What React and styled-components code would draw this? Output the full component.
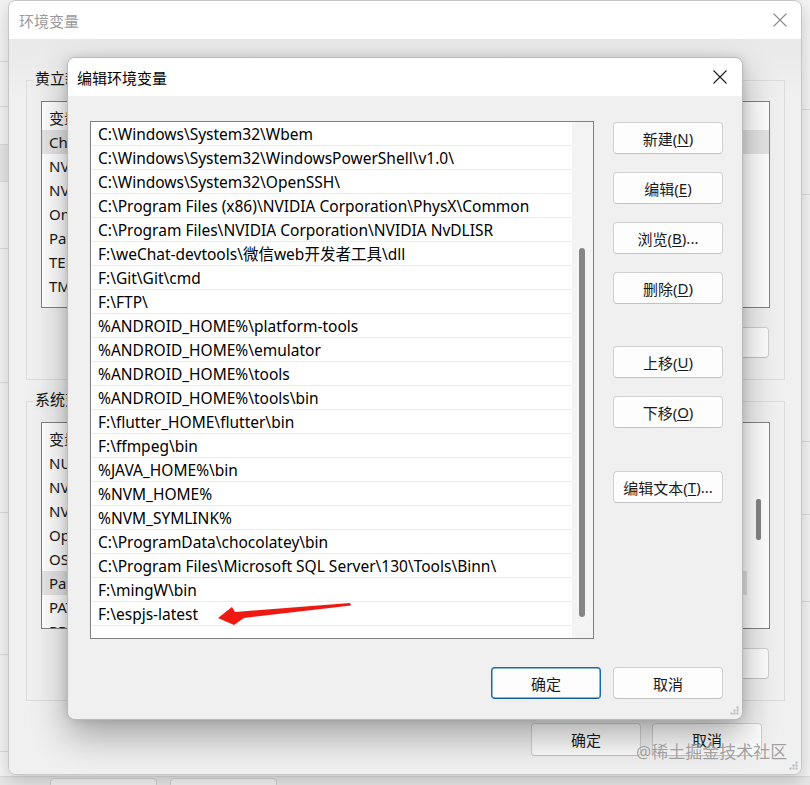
import React from "react";
import styled, { createGlobalStyle } from "styled-components";

const GlobalStyle = createGlobalStyle`
  html, body { margin: 0; padding: 0; }
  body {
    width: 810px; height: 785px; overflow: hidden; background: #ebebeb;
    font-family: "Noto Sans", "Noto Sans CJK SC", sans-serif;
    -webkit-font-smoothing: antialiased;
  }
  * { box-sizing: border-box; }
`;

const FONT = `"Noto Sans", "Noto Sans CJK SC", sans-serif`;

const Desktop = styled.div`
  position: relative;
  width: 810px;
  height: 785px;
  overflow: hidden;
  background: #ebebeb;
  font-family: ${FONT};
`;

/* ---------- far background window ---------- */
const BackWindow = styled.div`
  position: absolute;
  left: -20px;
  top: 0;
  width: 850px;
  height: 820px;
  background: #f3f3f3;
  display: grid;
  grid-template-columns: 28px 794px 28px;
  grid-template-rows: 776px auto;
`;

const Strip = styled.div`
  display: flex;
  flex-direction: column;
  background: #f4f4f4;
`;

const StripCell = styled.div`
  height: ${(p) => p.$h}px;
  border-bottom: ${(p) => (p.$noLine ? "none" : "1px solid #dadada")};
  background: ${(p) => (p.$grey ? "#e6e6e6" : "transparent")};
  display: flex;
  align-items: ${(p) => p.$align || "center"};
  justify-content: flex-end;
  font-size: 17px;
  color: #222;
  overflow: hidden;
  white-space: nowrap;
  padding-right: ${(p) => p.$pr ?? 20}px;
  padding-bottom: ${(p) => p.$pb ?? 0}px;
`;

const BackFooter = styled.div`
  grid-column: 1 / 4;
  display: flex;
  gap: 13px;
  padding-left: 70px;
  border-top: 1px solid #d8d8d8;
  background: #e6e6e6;
`;

const BackButton = styled.div`
  width: 107px;
  height: 30px;
  margin-top: 1px;
  border: 1px solid #cfcfcf;
  border-radius: 4px;
  background: #f2f2f2;
  font-size: 15px;
  color: ${(p) => (p.$disabled ? "#9a9a9a" : "#111")};
  display: flex;
  justify-content: center;
  padding-top: 2px;
`;

/* ---------- shared window parts ---------- */
const TitleBar = styled.div`
  height: 38px;
  flex: none;
  background: #ffffff;
  display: flex;
  align-items: center;
  justify-content: space-between;
  padding-left: ${(p) => p.$pl}px;
  padding-right: ${(p) => p.$pr}px;
  font-size: 15px;
  color: ${(p) => (p.$inactive ? "#9b9b9b" : "#000")};
`;

const CloseIcon = ({ color }) => (
  <svg width="14" height="14" viewBox="0 0 14 14">
    <path d="M0.5 0.5 L13.5 13.5 M13.5 0.5 L0.5 13.5" stroke={color} strokeWidth="1.1" fill="none" />
  </svg>
);

const Grip = styled.svg`
  position: absolute;
  right: ${(p) => p.$r}px;
  bottom: ${(p) => p.$b}px;
`;

const GripIcon = ({ r, b }) => (
  <Grip $r={r} $b={b} width="10" height="10" viewBox="0 0 10 10">
    <g fill="#b8b8b8">
      <rect x="7.5" y="0.5" width="2" height="2" />
      <rect x="4.5" y="3.5" width="2" height="2" />
      <rect x="7.5" y="3.5" width="2" height="2" />
      <rect x="1.5" y="6.5" width="2" height="2" />
      <rect x="4.5" y="6.5" width="2" height="2" />
      <rect x="7.5" y="6.5" width="2" height="2" />
    </g>
  </Grip>
);

const Button = styled.div`
  width: 110px;
  height: ${(p) => p.$h || 32}px;
  flex: none;
  margin-top: ${(p) => p.$mt || 0}px;
  border: 1px solid ${(p) => (p.$primary ? "#1868b3" : "#d0d0d0")};
  border-bottom-color: ${(p) => (p.$primary ? "#0f5a9f" : "#c2c2c2")};
  box-shadow: ${(p) => (p.$primary ? "inset 0 0 0 0.5px #1868b3" : "none")};
  border-radius: 4px;
  background: #fdfdfd;
  display: flex;
  align-items: center;
  justify-content: center;
  font-size: 15px;
  color: #1a1a1a;
  white-space: nowrap;
  u { text-decoration-thickness: 1px; text-underline-offset: 2px; }
`;

/* ---------- environment variables window ---------- */
const EnvWindow = styled.div`
  position: absolute;
  left: 8px;
  top: 0;
  width: 794px;
  height: 775px;
  border: 1px solid #c6c6c6;
  border-radius: 8px;
  background: #f0f0f0;
  overflow: hidden;
  display: flex;
  flex-direction: column;
  box-shadow: 0 6px 18px rgba(0, 0, 0, 0.18);
`;

const EnvBody = styled.div`
  flex: 1;
  display: flex;
  flex-direction: column;
  padding: 0 16px 0 17px;
  background: linear-gradient(#e9e9e9, #f0f0f0 60px);
`;

const GroupBox = styled.div`
  position: relative;
  margin-top: ${(p) => p.$mt}px;
  height: 300px;
  border: 1px solid #dcdcdc;
  padding: 20px 14px 0 14px;
  display: flex;
  flex-direction: column;
`;

const Legend = styled.span`
  position: absolute;
  top: -13px;
  left: 6px;
  padding: 0 2px;
  line-height: 20px;
  font-size: 15px;
  color: #111;
  background: #eeeeee;
`;

const VarList = styled.div`
  height: 207px;
  border: 1px solid #828282;
  background: #fff;
  display: flex;
  position: relative;
  overflow: hidden;
`;

const VarRows = styled.div`
  flex: 1;
  padding-top: 2px;
`;

const VarRow = styled.div`
  height: ${(p) => (p.$header ? 26 : 24)}px;
  display: flex;
  align-items: center;
  padding-left: 7px;
  font-size: 15px;
  color: #1a1a1a;
  white-space: nowrap;
  background: ${(p) => (p.$sel ? "#e5e5e5" : "transparent")};
`;

const EnvScroll = styled.div`
  width: 22px;
  flex: none;
  padding-top: ${(p) => p.$top}px;
  display: flex;
  justify-content: center;
`;

const EnvThumb = styled.div`
  width: 5px;
  height: ${(p) => p.$h}px;
  background: #858585;
  border-radius: 2px;
`;

const ButtonRow = styled.div`
  display: flex;
  justify-content: flex-end;
  gap: 11px;
  margin-top: ${(p) => p.$mt}px;
  padding-right: 1px;
`;

const EnvFooter = styled.div`
  display: flex;
  justify-content: flex-end;
  gap: 11px;
  margin-top: 22px;
  padding-right: 23px;
`;

/* ---------- edit dialog ---------- */
const Dialog = styled.div`
  position: absolute;
  left: 67px;
  top: 57px;
  width: 676px;
  height: 663px;
  border: 1px solid #b9b9b9;
  border-radius: 8px;
  background: #f0f0f0;
  overflow: hidden;
  display: flex;
  flex-direction: column;
  box-shadow: 0 16px 36px rgba(0, 0, 0, 0.32), 0 0 10px rgba(0, 0, 0, 0.12);
`;

const DialogBody = styled.div`
  flex: 1;
  display: flex;
  flex-direction: column;
  padding: 25px 19px 0 22px;
`;

const DialogMain = styled.div`
  display: flex;
  gap: 19px;
`;

const PathList = styled.div`
  width: 504px;
  height: 518px;
  flex: none;
  border: 1px solid #7f7f7f;
  background: #fff;
  display: flex;
  overflow: hidden;
`;

const PathRows = styled.div`
  flex: 1;
  display: flex;
  flex-direction: column;
`;

const PathRow = styled.div`
  height: 24px;
  flex: none;
  border-bottom: 1px solid #ececec;
  padding-left: 7px;
  font-size: 15.5px;
  line-height: 24px;
  color: #000;
  white-space: nowrap;
  overflow: hidden;
`;

const ScrollTrack = styled.div`
  width: 21px;
  flex: none;
  background: #f4f4f4;
  padding: 126px 0 0 7px;
`;

const ScrollThumb = styled.div`
  width: 6px;
  height: 369px;
  border-radius: 3px;
  background: #858585;
`;

const ButtonCol = styled.div`
  display: flex;
  flex-direction: column;
  padding-top: 1px;
`;

const DialogFooter = styled.div`
  display: flex;
  justify-content: flex-end;
  gap: 12px;
  margin-top: 28px;
`;

const Watermark = styled.div`
  position: absolute;
  left: 636px;
  top: 740px;
  font-size: 17px;
  line-height: 24px;
  color: rgba(130, 130, 130, 0.75);
  white-space: nowrap;
  text-shadow: 0 0 1px rgba(255, 255, 255, 0.6);
`;

const ArrowSvg = styled.svg`
  position: absolute;
  left: 210px;
  top: 595px;
`;

const paths = [
  "C:\\Windows\\System32\\Wbem",
  "C:\\Windows\\System32\\WindowsPowerShell\\v1.0\\",
  "C:\\Windows\\System32\\OpenSSH\\",
  "C:\\Program Files (x86)\\NVIDIA Corporation\\PhysX\\Common",
  "C:\\Program Files\\NVIDIA Corporation\\NVIDIA NvDLISR",
  "F:\\weChat-devtools\\微信web开发者工具\\dll",
  "F:\\Git\\Git\\cmd",
  "F:\\FTP\\",
  "%ANDROID_HOME%\\platform-tools",
  "%ANDROID_HOME%\\emulator",
  "%ANDROID_HOME%\\tools",
  "%ANDROID_HOME%\\tools\\bin",
  "F:\\flutter_HOME\\flutter\\bin",
  "F:\\ffmpeg\\bin",
  "%JAVA_HOME%\\bin",
  "%NVM_HOME%",
  "%NVM_SYMLINK%",
  "C:\\ProgramData\\chocolatey\\bin",
  "C:\\Program Files\\Microsoft SQL Server\\130\\Tools\\Binn\\",
  "F:\\mingW\\bin",
  "F:\\espjs-latest",
  "",
];

const userVars = ["ChocolateyLastPathUpdate", "NVM_HOME", "NVM_SYMLINK", "OneDrive", "Path", "TEMP", "TMP"];

const sysVars = ["NUMBER_OF_PROCESSORS", "NVM_HOME", "NVM_SYMLINK", "OpenSSL_DIR", "OS", "Path", "PATHEXT", "PROCESSOR_ARCHITECTURE"];

const leftCells = [
  { h: 62, t: "4", align: "flex-end", pb: 2 },
  { h: 45 },
  { h: 38 },
  { h: 37, grey: true },
  { h: 67, t: "。" },
  { h: 58, t: "虚", noLine: true },
  { h: 76 },
  { h: 130 },
  { h: 142 },
  { h: 97 },
];

const rightCells = [{ h: 110 }, { h: 85 }, { h: 247 }, { h: 73 }, { h: 87 }];

export default function App() {
  return (
    <>
      <GlobalStyle />
      <Desktop>
        <BackWindow>
          <Strip>
            {leftCells.map((c, i) => (
              <StripCell key={i} $h={c.h} $grey={c.grey} $align={c.align} $pr={14} $pb={c.pb} $noLine={c.noLine}>
                {c.t}
              </StripCell>
            ))}
          </Strip>
          <div />
          <Strip>
            {rightCells.map((c, i) => (
              <StripCell key={i} $h={c.h} />
            ))}
          </Strip>
          <BackFooter>
            <BackButton>取消</BackButton>
            <BackButton $disabled>应用(A)</BackButton>
          </BackFooter>
        </BackWindow>

        <EnvWindow>
          <TitleBar $inactive $pl={10} $pr={14}>
            环境变量
            <CloseIcon color="#8a8a8a" />
          </TitleBar>
          <EnvBody>
            <GroupBox $mt={41}>
              <Legend>黄立新 的用户变量(U)</Legend>
              <VarList>
                <VarRows>
                  <VarRow $header>变量</VarRow>
                  {userVars.map((n, i) => (
                    <VarRow key={n} $sel={i === 0}>{n}</VarRow>
                  ))}
                </VarRows>
              </VarList>
              <ButtonRow $mt={19}>
                <Button $h={31}>新建(<u>N</u>)...</Button>
                <Button $h={31}>编辑(<u>E</u>)...</Button>
                <Button $h={31}>删除(<u>D</u>)</Button>
              </ButtonRow>
            </GroupBox>
            <GroupBox $mt={21}>
              <Legend>系统变量(S)</Legend>
              <VarList>
                <VarRows>
                  <VarRow $header>变量</VarRow>
                  {sysVars.map((n, i) => (
                    <VarRow key={n} $sel={i === 5}>{n}</VarRow>
                  ))}
                </VarRows>
                <EnvScroll $top={76}>
                  <EnvThumb $h={41} />
                </EnvScroll>
              </VarList>
              <ButtonRow $mt={19}>
                <Button $h={31}>新建(<u>W</u>)...</Button>
                <Button $h={31}>编辑(<u>I</u>)...</Button>
                <Button $h={31}>删除(<u>L</u>)</Button>
              </ButtonRow>
            </GroupBox>
            <EnvFooter>
              <Button $h={33}>确定</Button>
              <Button $h={33}>取消</Button>
            </EnvFooter>
          </EnvBody>
          <GripIcon r={3} b={3} />
        </EnvWindow>

        <Dialog>
          <TitleBar $pl={9} $pr={15}>
            编辑环境变量
            <CloseIcon color="#1a1a1a" />
          </TitleBar>
          <DialogBody>
            <DialogMain>
              <PathList>
                <PathRows>
                  {paths.map((p, i) => (
                    <PathRow key={i}>{p}</PathRow>
                  ))}
                </PathRows>
                <ScrollTrack>
                  <ScrollThumb />
                </ScrollTrack>
              </PathList>
              <ButtonCol>
                <Button>新建(<u>N</u>)</Button>
                <Button $mt={18}>编辑(<u>E</u>)</Button>
                <Button $mt={18}>浏览(<u>B</u>)...</Button>
                <Button $mt={18}>删除(<u>D</u>)</Button>
                <Button $mt={42}>上移(<u>U</u>)</Button>
                <Button $mt={18}>下移(<u>O</u>)</Button>
                <Button $mt={43}>编辑文本(<u>T</u>)...</Button>
              </ButtonCol>
            </DialogMain>
            <DialogFooter>
              <Button $primary>确定</Button>
              <Button>取消</Button>
            </DialogFooter>
          </DialogBody>
          <GripIcon r={3} b={3} />
        </Dialog>

        <ArrowSvg width="150" height="35" viewBox="0 0 150 35">
          <polygon points="8,23 22,12 25,17 140,8 141,10.5 34,23 24,30" fill="#ee1a12" />
        </ArrowSvg>

        <Watermark>@稀土掘金技术社区</Watermark>
      </Desktop>
    </>
  );
}
